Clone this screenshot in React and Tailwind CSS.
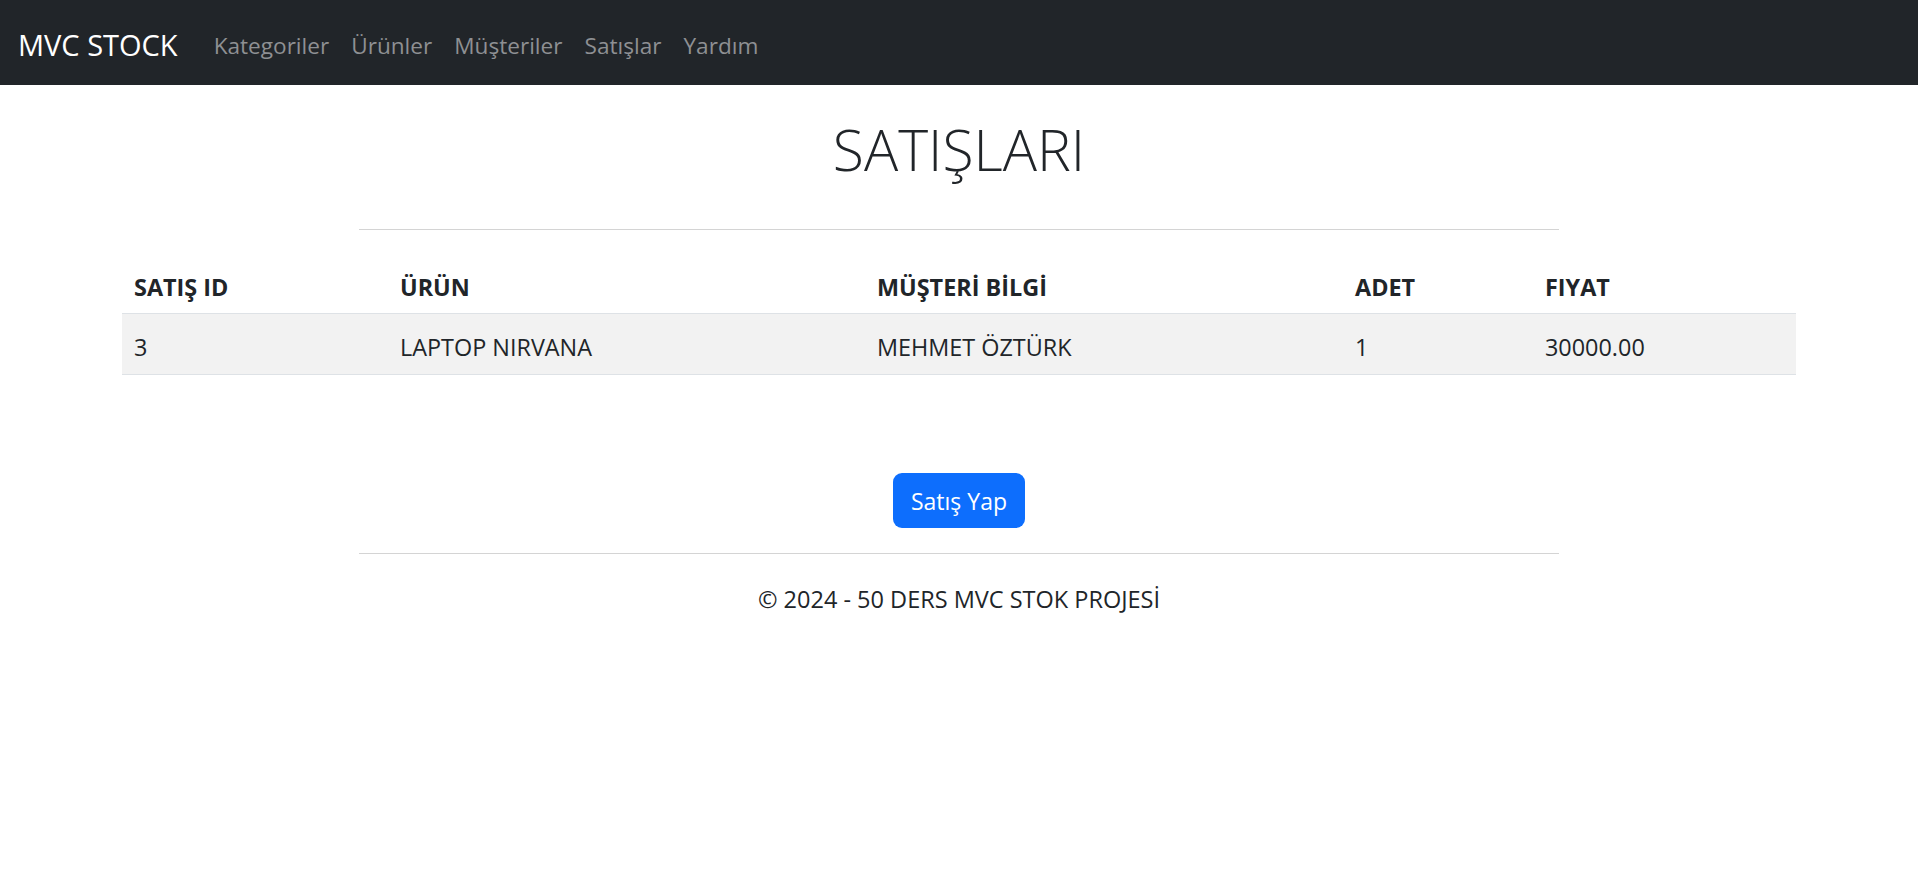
import React from 'react'

const font = "font-['Open_Sans','Noto_Sans',sans-serif]"

const columns = [
  { label: 'SATIŞ ID', w: 'w-[266px]' },
  { label: 'ÜRÜN', w: 'w-[477px]' },
  { label: 'MÜŞTERİ BİLGİ', w: 'w-[478px]' },
  { label: 'ADET', w: 'w-[190px]' },
  { label: 'FIYAT', w: 'w-[263px]' },
]

const rows = [['3', 'LAPTOP NIRVANA', 'MEHMET ÖZTÜRK', '1', '30000.00']]

export default function App() {
  return (
    <div className={`min-h-[891px] bg-white text-[#212529] ${font}`}>
      <nav className="flex h-[85px] items-center bg-[#212529] px-[18px] pt-[4px]">
        <a className="mr-[24px] text-[29px] leading-none text-white">MVC STOCK</a>
        <ul className="flex items-center gap-[22px] px-[12px] pt-[3px] text-[22.6px] leading-none text-[#8e9093]">
          <li>Kategoriler</li>
          <li>Ürünler</li>
          <li>Müşteriler</li>
          <li>Satışlar</li>
          <li>Yardım</li>
        </ul>
      </nav>

      <div className="mx-auto w-[1710px] px-[18px]">
        <h1 className="mt-[28px] text-center text-[57px] font-light leading-[72px]">SATIŞLARI</h1>
        <hr className="mx-auto mt-[44px] w-[1200px] border-t border-[#d4d4d4]" />

        <table className="mt-[23px] w-full border-collapse text-left text-[23.4px] leading-[36px]">
          <thead>
            <tr className="border-b border-[#dee2e6]">
              {columns.map((c) => (
                <th key={c.label} className={`${c.w} px-[12px] pt-[16px] pb-[8px] font-bold`}>
                  {c.label}
                </th>
              ))}
            </tr>
          </thead>
          <tbody>
            {rows.map((r, i) => (
              <tr key={i} className="border-b border-[#dee2e6] bg-[#f2f2f2]">
                {r.map((cell, j) => (
                  <td key={j} className="px-[12px] pt-[15px] pb-[9px]">
                    {cell}
                  </td>
                ))}
              </tr>
            ))}
          </tbody>
        </table>

        <div className="mt-[98px] flex justify-center">
          <button
            type="button"
            className="h-[55px] rounded-[9px] bg-[#0d6efd] px-[18px] pt-[2px] text-[23px] text-white"
          >
            Satış Yap
          </button>
        </div>
      </div>

      <hr className="mx-auto mt-[25px] w-[1200px] border-t border-[#d4d4d4]" />
      <footer className="mt-[27px] text-center text-[23.5px] leading-[36px]">
        © 2024 - 50 DERS MVC STOK PROJESİ
      </footer>
    </div>
  )
}
